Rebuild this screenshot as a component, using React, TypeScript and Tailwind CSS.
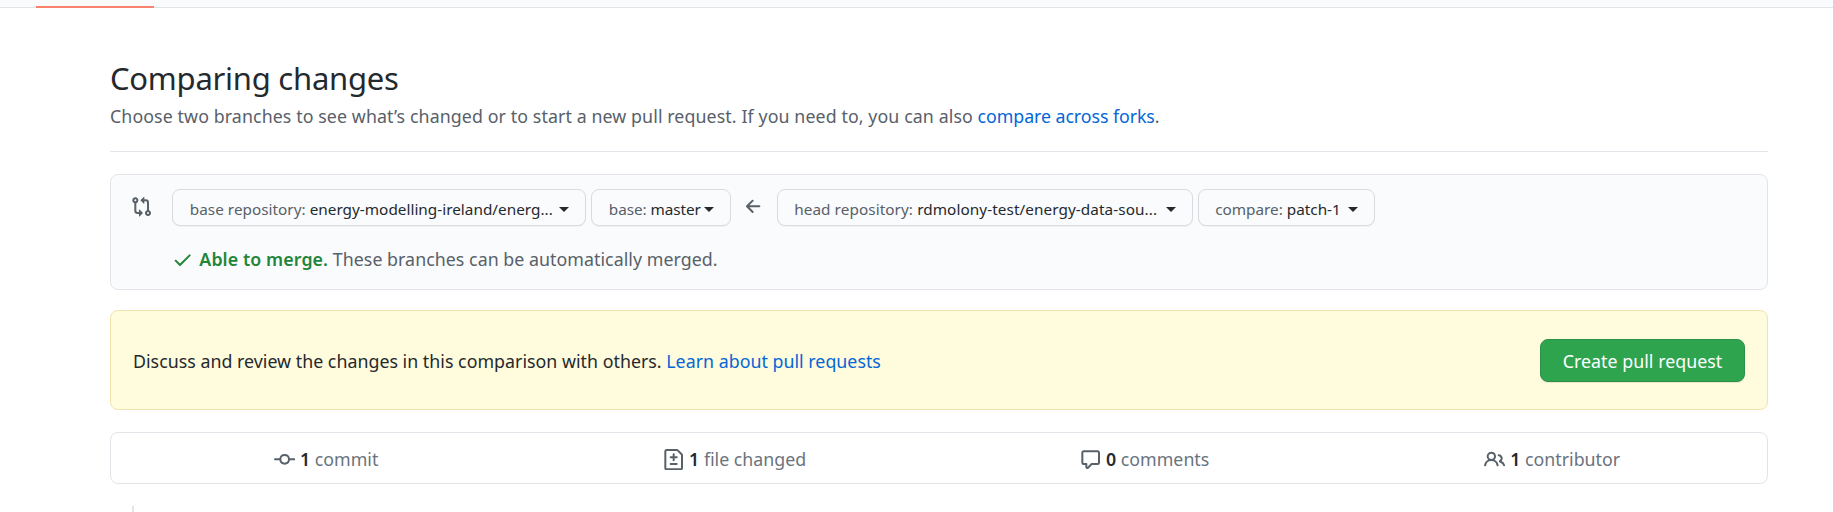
import type { ReactNode } from "react";

const PATHS = {
  compare:
    "M9.573.677L7.177 3.073a.25.25 0 000 .354l2.396 2.396A.25.25 0 0010 5.646V4h1a1 1 0 011 1v5.628a2.251 2.251 0 101.5 0V5A2.5 2.5 0 0011 2.5h-1V.854a.25.25 0 00-.427-.177zM6 12v-1.646a.25.25 0 01.427-.177l2.396 2.396a.25.25 0 010 .354l-2.396 2.396A.25.25 0 016 15.146V13.5H5A2.5 2.5 0 012.5 11V5.372a2.25 2.25 0 111.5 0V11a1 1 0 001 1h1zm6.75 0a.75.75 0 100 1.5.75.75 0 000-1.5zM4 3.25a.75.75 0 11-1.5 0 .75.75 0 011.5 0z",
  check:
    "M13.78 4.22a.75.75 0 010 1.06l-7.25 7.25a.75.75 0 01-1.06 0L2.22 9.28a.75.75 0 011.06-1.06L6 10.94l6.72-6.72a.75.75 0 011.06 0z",
  arrowLeft:
    "M7.78 12.53a.75.75 0 01-1.06 0L2.47 8.28a.75.75 0 010-1.06l4.25-4.25a.75.75 0 011.06 1.06L4.81 7h7.44a.75.75 0 010 1.5H4.81l2.97 2.97a.75.75 0 010 1.06z",
  commit:
    "M10.5 7.75a2.5 2.5 0 11-5 0 2.5 2.5 0 015 0zm1.43.75a4.002 4.002 0 01-7.86 0H.75a.75.75 0 110-1.5h3.32a4.001 4.001 0 017.86 0h3.32a.75.75 0 110 1.5h-3.32z",
  fileDiff:
    "M2.75 1.5a.25.25 0 00-.25.25v12.5c0 .138.112.25.25.25h10.5a.25.25 0 00.25-.25V4.664a.25.25 0 00-.073-.177l-2.914-2.914a.25.25 0 00-.177-.073H2.75zM1 1.75C1 .784 1.784 0 2.75 0h7.586c.464 0 .909.184 1.237.513l2.914 2.914c.329.328.513.773.513 1.237v9.586A1.75 1.75 0 0113.25 16H2.75A1.75 1.75 0 011 14.25V1.75zm7 1.5a.75.75 0 01.75.75v1.5h1.5a.75.75 0 010 1.5h-1.5v1.5a.75.75 0 01-1.5 0V7h-1.5a.75.75 0 010-1.5h1.5V4A.75.75 0 018 3.25zm-3 8a.75.75 0 01.75-.75h4.5a.75.75 0 010 1.5h-4.5a.75.75 0 01-.75-.75z",
  comment:
    "M2.75 2.5a.25.25 0 00-.25.25v7.5c0 .138.112.25.25.25h2a.75.75 0 01.75.75v2.19l2.72-2.72a.75.75 0 01.53-.22h4.5a.25.25 0 00.25-.25v-7.5a.25.25 0 00-.25-.25H2.75zM1 2.75C1 1.784 1.784 1 2.75 1h10.5c.966 0 1.75.784 1.75 1.75v7.5A1.75 1.75 0 0113.25 12H9.06l-2.573 2.573A1.457 1.457 0 014 13.543V12H2.75A1.75 1.75 0 011 10.25v-7.5z",
  people:
    "M5.5 3.5a2 2 0 100 4 2 2 0 000-4zM2 5.5a3.5 3.5 0 115.898 2.549 5.507 5.507 0 013.034 4.084.75.75 0 11-1.482.235 4.001 4.001 0 00-7.9 0 .75.75 0 01-1.482-.236A5.507 5.507 0 013.102 8.05 3.49 3.49 0 012 5.5zM11 4a.75.75 0 100 1.5 1.5 1.5 0 01.666 2.844.75.75 0 00-.416.672v.352a.75.75 0 00.574.73c1.2.289 2.162 1.2 2.522 2.372a.75.75 0 101.434-.44 5.01 5.01 0 00-2.56-3.012A3 3 0 0011 4z",
};

function Icon({ name, className = "" }: { name: keyof typeof PATHS; className?: string }) {
  return (
    <svg viewBox="0 0 16 16" className={`size-[21.33px] shrink-0 ${className}`} fill="currentColor" fillRule="evenodd" aria-hidden="true">
      <path d={PATHS[name]} />
    </svg>
  );
}

function Picker({ label, value, className }: { label: string; value: string; className: string }) {
  return (
    <button
      type="button"
      className={`flex h-[37px] shrink-0 items-center justify-between rounded-lg border border-[#d8dbdf] bg-[#fafbfc] pr-4 pl-[16.5px] text-[15.3px] whitespace-nowrap shadow-[0_1px_0_rgba(27,31,35,0.04)] ${className}`}
    >
      <span className="pt-1 leading-[31px]">
        <span className="text-[#586069]">{label}</span> <span className="text-[#24292e]">{value}</span>
      </span>
      <span className="mt-[3px] border-x-[5.3px] border-t-[5.3px] border-x-transparent border-t-[#24292e]" />
    </button>
  );
}

function Stat({ icon, count, label, className = "" }: { icon: keyof typeof PATHS; count: number; label: string; className?: string }) {
  return (
    <div className={`flex items-center justify-center ${className}`}>
      <Icon name={icon} className="mt-[3px] text-[#586069]" />
      <span className="pt-[2px] pl-[5px] leading-7">
        <span className="font-semibold text-[#24292e]">{count}</span> <span className="text-[#6a737d]">{label}</span>
      </span>
    </div>
  );
}

function Link({ children }: { children: ReactNode }) {
  return <a href="#" className="text-[#0366d6]">{children}</a>;
}

export default function App() {
  return (
    <div className="h-[512px] overflow-hidden bg-white font-['Noto_Sans',sans-serif] text-[17.8px] text-[#24292e]">
      <div className="flex h-2 items-end border-b border-[#e1e4e8] bg-[#fafbfc] pl-9">
        <div className="-mb-px h-0.5 w-[118px] bg-[#f9826c]" />
      </div>

      <main className="mr-[65px] ml-[110px] pt-[50px]">
        <header className="border-b border-[#e1e4e8] pb-[21px]">
          <h1 className="pt-px text-[31px] leading-[39px] tracking-[-0.25px]">Comparing changes</h1>
          <p className="mt-1 leading-7 tracking-[0.095px] text-[#586069]">
            Choose two branches to see what’s changed or to start a new pull request. If you need to, you can also{" "}
            <span className="tracking-[-0.07px]">
              <Link>compare across forks</Link>.
            </span>
          </p>
        </header>

        <section className="mt-[22px] h-[116px] rounded-lg border border-[#e1e4e8] bg-[#fafbfc] pt-[14px] pl-[20px]">
          <div className="flex items-center">
            <Icon name="compare" className="mr-[20px] mb-[2px] text-[#586069]" />
            <Picker label="base repository:" value="energy-modelling-ireland/energ..." className="w-[414px] tracking-[0.02px]" />
            <Picker label="base:" value="master" className="ml-[5px] w-[140px] tracking-[-0.07px]" />
            <Icon name="arrowLeft" className="mr-[12px] mb-px ml-[12px] text-[#586069]" />
            <Picker label="head repository:" value="rdmolony-test/energy-data-sou..." className="w-[416px] tracking-[0.08px]" />
            <Picker label="compare:" value="patch-1" className="ml-[5px] w-[177px]" />
          </div>
          <p className="mt-[19px] flex items-center pl-[41px] leading-7 text-[#586069]">
            <Icon name="check" className="mt-[2px] mr-[6px] text-[#22863a]" />
            <span className="tracking-[0.04px]">
              <span className="font-semibold tracking-[0.1px] text-[#22863a]">Able to merge.</span> These branches can be automatically merged.
            </span>
          </p>
        </section>

        <section className="mt-5 flex h-[100px] items-center justify-between rounded-lg border border-[#f0e4ae] bg-[#fffbdd] pr-[22px] pl-[22px]">
          <p className="pt-[2px] leading-7 tracking-[0.02px]">
            Discuss and review the changes in this comparison with others. <Link>Learn about pull requests</Link>
          </p>
          <button
            type="button"
            className="h-[43px] w-[205px] rounded-lg border border-[#2a9147] bg-[#2ea44f] pt-[2px] leading-7 tracking-[0.04px] text-white shadow-[0_1px_0_rgba(27,31,35,0.1)]"
          >
            Create pull request
          </button>
        </section>

        <section className="mt-[22px] grid h-[52px] grid-cols-[430px_387px_433px_1fr] items-center rounded-lg border border-[#e1e4e8]">
          <Stat icon="commit" count={1} label="commit" />
          <Stat icon="fileDiff" count={1} label="file changed" />
          <Stat icon="comment" count={0} label="comments" />
          <Stat icon="people" count={1} label="contributor" className="pr-6" />
        </section>

        <div className="mt-[22px] ml-[22px] h-[6px] w-0.5 bg-[#e1e4e8]" />
      </main>
    </div>
  );
}
